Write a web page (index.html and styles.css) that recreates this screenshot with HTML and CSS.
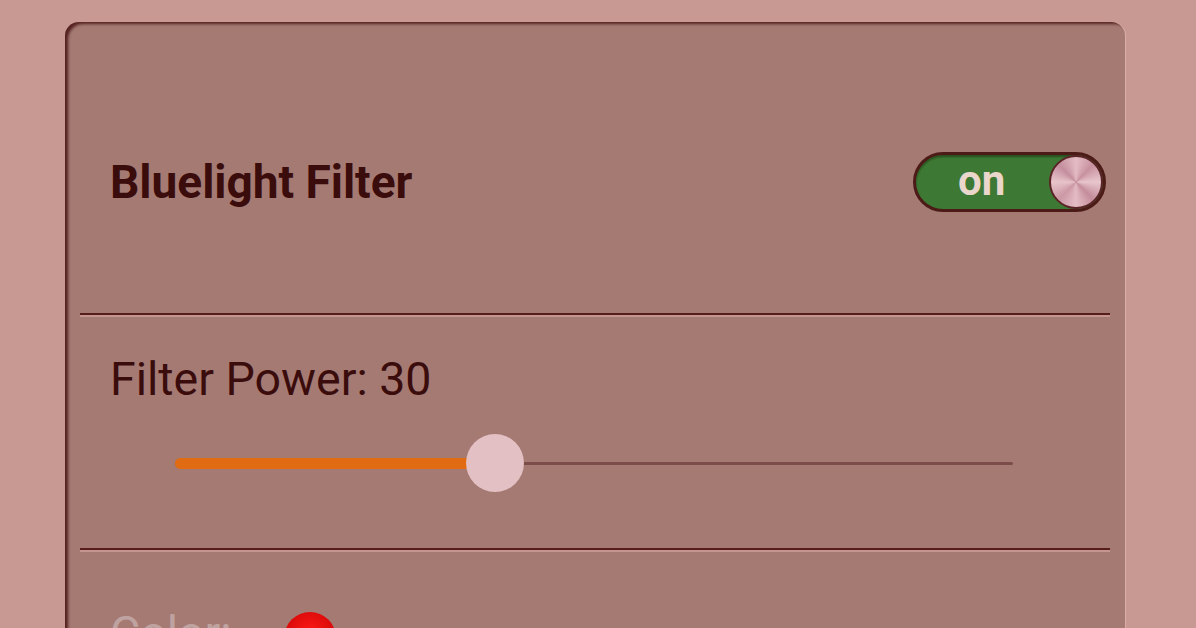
FILE: index.html
```html
<!DOCTYPE html>
<html lang="en">
<head>
    <meta charset="UTF-8">
    <meta name="viewport" content="width=device-width, initial-scale=1.0">
    <title>Display Settings</title>
    <link rel="stylesheet" href="styles.css">
</head>
<body>
    <div class="panel">
        <div class="setting-row toggle-row">
            <span class="setting-title">Bluelight Filter</span>
            <div class="switch is-on">
                <span class="switch-label">on</span>
                <span class="switch-knob"></span>
            </div>
        </div>

        <div class="divider"></div>

        <div class="setting-row slider-row">
            <span class="setting-label">Filter Power: 30</span>
            <div class="slider">
                <div class="slider-track"></div>
                <div class="slider-fill" style="width: 38.2%"></div>
                <div class="slider-thumb" style="left: 38.2%"></div>
            </div>
        </div>

        <div class="divider"></div>

        <div class="setting-row color-row">
            <span class="setting-label muted">Color:</span>
            <span class="color-dot"></span>
        </div>
    </div>
</body>
</html>
```

FILE: styles.css
```css
body {
    margin: 0;
    height: 628px;
    overflow: hidden;
    font-family: Roboto, "Liberation Sans", sans-serif;
    background-color: #c89892;
    color: #3a0c0c;
}

.panel {
    margin: 22px 0 0 65px;
    width: 1060px;
    height: 606px;
    padding: 0 15px;
    box-sizing: border-box;
    overflow: hidden;
    background-color: #a57a73;
    border-radius: 14px 14px 0 0;
    box-shadow: inset 4px 3px 3px -1px rgba(70, 18, 18, 0.85),
                1px 0 1px rgba(240, 200, 195, 0.5);
}

.setting-row {
    padding-left: 30px;
}

.toggle-row {
    display: flex;
    align-items: center;
    justify-content: space-between;
    padding: 130px 4px 101px 30px;
}

.setting-title {
    font-size: 46px;
    font-weight: bold;
    line-height: 60px;
}

.switch {
    position: relative;
    width: 193px;
    height: 60px;
    box-sizing: border-box;
    border: 3px solid #4c1a17;
    border-radius: 30px;
    background-color: #3d7934;
    box-shadow: inset 0 2px 2px rgba(20, 40, 10, 0.5);
}

.switch-label {
    position: absolute;
    left: 42px;
    top: 0;
    line-height: 52px;
    font-size: 42px;
    font-weight: bold;
    color: #ead6ca;
}

.switch-knob {
    position: absolute;
    right: 0;
    top: 0;
    width: 54px;
    height: 54px;
    box-sizing: border-box;
    border-radius: 50%;
    border: 2px solid #5a2426;
    background: conic-gradient(#e4bcc4, #c891a0, #e8c6cc, #c48c9c, #e4bcc4, #cc98a6, #e8c4ca, #c48e9e, #e4bcc4);
}

.divider {
    height: 2px;
    background-color: #571c1c;
    box-shadow: 0 2px 0 #c5958f;
}

.slider-row {
    padding-top: 37px;
    padding-bottom: 56px;
}

.setting-label {
    display: block;
    font-size: 46.5px;
    line-height: 54px;
}

.slider {
    position: relative;
    height: 58px;
    margin: 28px 97px 0 65px;
}

.slider-track {
    position: absolute;
    left: 0;
    right: 0;
    top: 28px;
    height: 3px;
    background-color: #7c4c4a;
    border-radius: 2px;
}

.slider-fill {
    position: absolute;
    left: 0;
    top: 24px;
    height: 11px;
    background-color: #e06b12;
    border-radius: 6px;
}

.slider-thumb {
    position: absolute;
    top: 0;
    width: 58px;
    height: 58px;
    margin-left: -29px;
    border-radius: 50%;
    background-color: #e3c0c3;
}

.color-row {
    display: flex;
    align-items: flex-start;
    padding-top: 56px;
}

.muted {
    color: #bfa3a1;
}

.color-dot {
    width: 52px;
    height: 52px;
    margin: 6px 0 0 52px;
    border-radius: 50%;
    background: radial-gradient(circle at 50% 40%, #ff1a14, #d20808 70%, #8a1010);
}
```
